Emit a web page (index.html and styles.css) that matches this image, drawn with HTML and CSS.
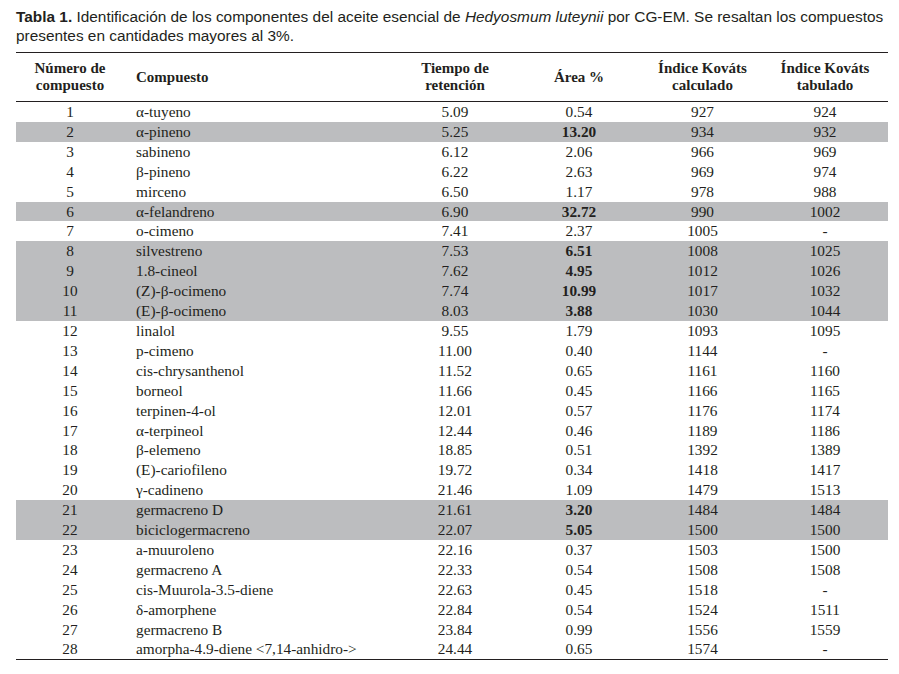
FILE: index.html
```html
<!DOCTYPE html>
<html lang="es">
<head>
<meta charset="utf-8">
<title>Tabla 1</title>
<link rel="stylesheet" href="styles.css">
</head>
<body>
<div class="page">
  <p class="caption"><b>Tabla 1.</b> Identificación de los componentes del aceite esencial de <i>Hedyosmum luteynii</i> por CG-EM. Se resaltan los compuestos<br>presentes en cantidades mayores al 3%.</p>
  <table class="data">
    <colgroup>
      <col class="c1"><col class="c2"><col class="c3"><col class="c4"><col class="c5"><col class="c6">
    </colgroup>
    <thead>
      <tr>
        <th>Número de<br>compuesto</th>
        <th class="left">Compuesto</th>
        <th>Tiempo de<br>retención</th>
        <th>Área %</th>
        <th>Índice Kováts<br>calculado</th>
        <th class="tab">Índice Kováts<br>tabulado</th>
      </tr>
    </thead>
    <tbody>
      <tr><td>1</td><td class="left">α-tuyeno</td><td>5.09</td><td>0.54</td><td>927</td><td class="tab">924</td></tr>
      <tr class="hl"><td>2</td><td class="left">α-pineno</td><td>5.25</td><td class="b">13.20</td><td>934</td><td class="tab">932</td></tr>
      <tr><td>3</td><td class="left">sabineno</td><td>6.12</td><td>2.06</td><td>966</td><td class="tab">969</td></tr>
      <tr><td>4</td><td class="left">β-pineno</td><td>6.22</td><td>2.63</td><td>969</td><td class="tab">974</td></tr>
      <tr><td>5</td><td class="left">mirceno</td><td>6.50</td><td>1.17</td><td>978</td><td class="tab">988</td></tr>
      <tr class="hl"><td>6</td><td class="left">α-felandreno</td><td>6.90</td><td class="b">32.72</td><td>990</td><td class="tab">1002</td></tr>
      <tr><td>7</td><td class="left">o-cimeno</td><td>7.41</td><td>2.37</td><td>1005</td><td class="tab">-</td></tr>
      <tr class="hl"><td>8</td><td class="left">silvestreno</td><td>7.53</td><td class="b">6.51</td><td>1008</td><td class="tab">1025</td></tr>
      <tr class="hl"><td>9</td><td class="left">1.8-cineol</td><td>7.62</td><td class="b">4.95</td><td>1012</td><td class="tab">1026</td></tr>
      <tr class="hl"><td>10</td><td class="left">(Z)-β-ocimeno</td><td>7.74</td><td class="b">10.99</td><td>1017</td><td class="tab">1032</td></tr>
      <tr class="hl"><td>11</td><td class="left">(E)-β-ocimeno</td><td>8.03</td><td class="b">3.88</td><td>1030</td><td class="tab">1044</td></tr>
      <tr><td>12</td><td class="left">linalol</td><td>9.55</td><td>1.79</td><td>1093</td><td class="tab">1095</td></tr>
      <tr><td>13</td><td class="left">p-cimeno</td><td>11.00</td><td>0.40</td><td>1144</td><td class="tab">-</td></tr>
      <tr><td>14</td><td class="left">cis-chrysanthenol</td><td>11.52</td><td>0.65</td><td>1161</td><td class="tab">1160</td></tr>
      <tr><td>15</td><td class="left">borneol</td><td>11.66</td><td>0.45</td><td>1166</td><td class="tab">1165</td></tr>
      <tr><td>16</td><td class="left">terpinen-4-ol</td><td>12.01</td><td>0.57</td><td>1176</td><td class="tab">1174</td></tr>
      <tr><td>17</td><td class="left">α-terpineol</td><td>12.44</td><td>0.46</td><td>1189</td><td class="tab">1186</td></tr>
      <tr><td>18</td><td class="left">β-elemeno</td><td>18.85</td><td>0.51</td><td>1392</td><td class="tab">1389</td></tr>
      <tr><td>19</td><td class="left">(E)-cariofileno</td><td>19.72</td><td>0.34</td><td>1418</td><td class="tab">1417</td></tr>
      <tr><td>20</td><td class="left">γ-cadineno</td><td>21.46</td><td>1.09</td><td>1479</td><td class="tab">1513</td></tr>
      <tr class="hl"><td>21</td><td class="left">germacreno D</td><td>21.61</td><td class="b">3.20</td><td>1484</td><td class="tab">1484</td></tr>
      <tr class="hl"><td>22</td><td class="left">biciclogermacreno</td><td>22.07</td><td class="b">5.05</td><td>1500</td><td class="tab">1500</td></tr>
      <tr><td>23</td><td class="left">a-muuroleno</td><td>22.16</td><td>0.37</td><td>1503</td><td class="tab">1500</td></tr>
      <tr><td>24</td><td class="left">germacreno A</td><td>22.33</td><td>0.54</td><td>1508</td><td class="tab">1508</td></tr>
      <tr><td>25</td><td class="left">cis-Muurola-3.5-diene</td><td>22.63</td><td>0.45</td><td>1518</td><td class="tab">-</td></tr>
      <tr><td>26</td><td class="left">δ-amorphene</td><td>22.84</td><td>0.54</td><td>1524</td><td class="tab">1511</td></tr>
      <tr><td>27</td><td class="left">germacreno B</td><td>23.84</td><td>0.99</td><td>1556</td><td class="tab">1559</td></tr>
      <tr><td>28</td><td class="left">amorpha-4.9-diene &lt;7,14-anhidro-&gt;</td><td>24.44</td><td>0.65</td><td>1574</td><td class="tab">-</td></tr>
    </tbody>
  </table>
</div>
</body>
</html>
```

FILE: styles.css
```css
html, body {
  margin: 0;
  padding: 0;
  background: #ffffff;
}

.page {
  padding: 7px 0 0 16px;
  width: 872px;
  color: #231f20;
}

.caption {
  margin: 0;
  font-family: "Liberation Sans", Arial, sans-serif;
  font-size: 15.4px;
  line-height: 19px;
  white-space: nowrap;
}

.data {
  margin-top: 7px;
  width: 872px;
  border-collapse: collapse;
  table-layout: fixed;
  font-family: "Liberation Serif", "Times New Roman", serif;
  font-size: 15.3px;
  color: #231f20;
}

.c1 { width: 108px; }
.c2 { width: 276px; }
.c3 { width: 110px; }
.c4 { width: 138px; }
.c5 { width: 109px; }
.c6 { width: 131px; }

.data thead tr {
  border-top: 1.5px solid #231f20;
  border-bottom: 1.5px solid #231f20;
}

.data th {
  height: 48px;
  padding: 0;
  font-weight: bold;
  font-size: 15px;
  line-height: 17px;
  text-align: center;
  vertical-align: middle;
}

.data tbody tr:last-child {
  border-bottom: 1.5px solid #231f20;
}

.data td {
  height: 19.9px;
  padding: 0;
  line-height: 19.9px;
  text-align: center;
  vertical-align: middle;
  white-space: nowrap;
}

.data .left {
  text-align: left;
  padding-left: 12px;
}

.data .tab {
  padding-left: 5px;
}

.data tr.hl td {
  background: #bcbdbf;
}

.data td.b {
  font-weight: bold;
}
```
